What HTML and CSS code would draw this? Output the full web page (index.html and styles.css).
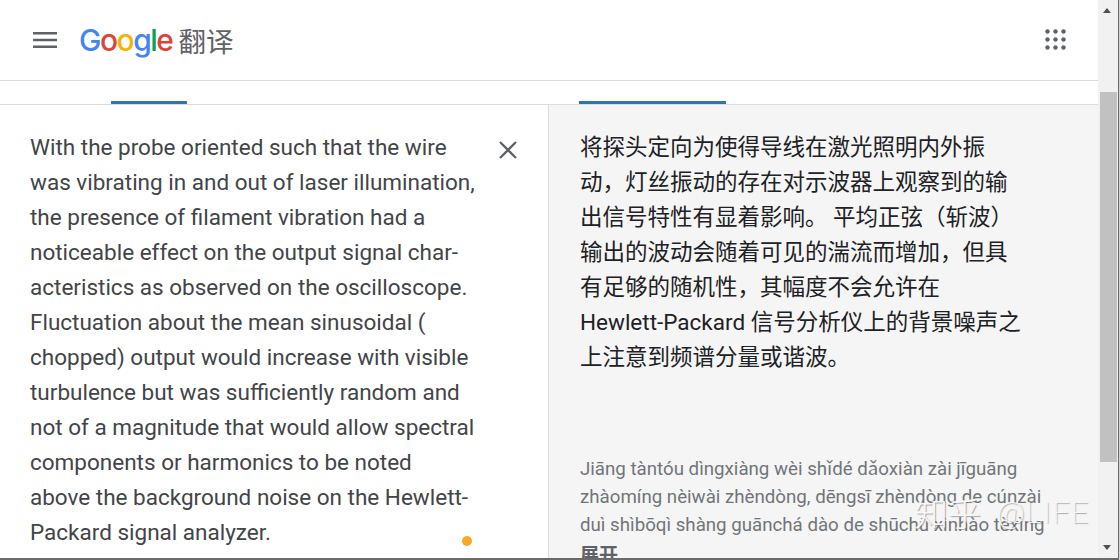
FILE: index.html
```html
<!DOCTYPE html>
<html lang="zh">
<head>
<meta charset="utf-8">
<title>Google 翻译</title>
<link rel="stylesheet" href="styles.css">
</head>
<body>
<div class="window">
  <div class="page">
    <header class="header">
      <div class="brand">
        <svg class="menu" width="24" height="24" viewBox="0 0 24 24"><path d="M0 4h24v2.6H0zM0 10.7h24v2.6H0zM0 17.4h24V20H0z" fill="#5f6368"/></svg>
        <span class="logo"><span class="g-blue">G</span><span class="g-red">o</span><span class="g-yellow">o</span><span class="g-blue">g</span><span class="g-green">l</span><span class="g-red">e</span></span>
        <span class="product">翻译</span>
      </div>
      <svg class="apps" width="21" height="21" viewBox="0 0 21 21" fill="#5f6368"><circle cx="2.5" cy="2.5" r="2.2"/><circle cx="10.5" cy="2.5" r="2.2"/><circle cx="18.5" cy="2.5" r="2.2"/><circle cx="2.5" cy="10.5" r="2.2"/><circle cx="10.5" cy="10.5" r="2.2"/><circle cx="18.5" cy="10.5" r="2.2"/><circle cx="2.5" cy="18.5" r="2.2"/><circle cx="10.5" cy="18.5" r="2.2"/><circle cx="18.5" cy="18.5" r="2.2"/></svg>
    </header>
    <div class="tabs">
      <div class="tab-side tab-left"><span class="tab-line tab-line-source"></span></div>
      <div class="tab-side tab-right"><span class="tab-line tab-line-target"></span></div>
    </div>
    <main class="panels">
      <section class="source">
        <p class="source-text">With the probe oriented such that the wire<br>was vibrating in and out of laser illumination,<br>the presence of filament vibration had a<br>noticeable effect on the output signal char-<br>acteristics as observed on the oscilloscope.<br>Fluctuation about the mean sinusoidal (<br>chopped) output would increase with visible<br>turbulence but was sufficiently random and<br>not of a magnitude that would allow spectral<br>components or harmonics to be noted<br>above the background noise on the Hewlett-<br>Packard signal analyzer.</p>
        <svg class="close" width="20" height="20" viewBox="0 0 20 20"><path d="M2 2l16 16M18 2L2 18" stroke="#5f6368" stroke-width="2.3" fill="none"/></svg>
        <span class="dot"></span>
      </section>
      <section class="target">
        <p class="target-text">将探头定向为使得导线在激光照明内外振<br>动，灯丝振动的存在对示波器上观察到的输<br>出信号特性有显着影响。 平均正弦（斩波）<br>输出的波动会随着可见的湍流而增加，但具<br>有足够的随机性，其幅度不会允许在<br>Hewlett-Packard 信号分析仪上的背景噪声之<br>上注意到频谱分量或谐波。</p>
        <p class="pinyin">Jiāng tàntóu dìngxiàng wèi shǐdé dǎoxiàn zài jīguāng<br>zhàomíng nèiwài zhèndòng, dēngsī zhèndòng de cúnzài<br>duì shìbōqì shàng guānchá dào de shūchū xìnhào tèxìng</p>
        <p class="expand">展开</p>
      </section>
    </main>
  </div>
  <div class="scrollbar">
    <span class="arrow arrow-up"></span>
    <span class="thumb"></span>
    <span class="arrow arrow-down"></span>
  </div>
  <div class="watermark"><span class="wm-cn">知乎</span><span class="wm-en">@LIFE</span></div>
</div>
</body>
</html>
```
FILE: styles.css
```css
* { box-sizing: border-box; }
html, body { margin: 0; height: 100%; overflow: hidden; }
body { background: #fff; font-family: Roboto, "Noto Sans CJK SC", sans-serif; }
.window { position: relative; display: flex; width: 1119px; height: 560px; border-bottom: 2px solid #6b6b6b; overflow: hidden; }
.page { width: 1098px; display: flex; flex-direction: column; }
.header { height: 81px; flex: none; display: flex; align-items: center; justify-content: space-between; padding: 0 32px 1px 33px; border-bottom: 1px solid #dadce0; }
.brand { display: flex; align-items: center; }
.menu { margin-right: 23px; }
.logo { font-family: Inter, "Open Sans", sans-serif; font-size: 30px; font-weight: 500; letter-spacing: -1.5px; line-height: 40px; margin-left: -1px; }
.g-blue { color: #4285f4; }
.g-red { color: #db4437; }
.g-yellow { color: #f4b400; }
.g-green { color: #0f9d58; }
.product { margin-left: 6px; font-size: 27.5px; color: #5f6368; line-height: 40px; font-family: "Noto Sans CJK SC", sans-serif; font-weight: 400; }
.tabs { height: 24px; flex: none; display: flex; border-bottom: 1px solid #dadce0; }
.tab-side { width: 549px; position: relative; display: flex; align-items: flex-end; }
.tab-left { padding-left: 111px; }
.tab-right { padding-left: 30px; }
.tab-line { height: 3px; background: #2b78b0; }
.tab-line-source { width: 76px; }
.tab-line-target { width: 147px; }
.panels { flex: 1; display: flex; min-height: 0; }
.source { position: relative; width: 549px; flex: none; padding: 25px 0 0 30px; border-right: 1px solid #dadce0; background: #fff; }
.source-text { margin: 0; font-size: 22.5px; line-height: 35px; color: #414548; white-space: nowrap; }
.close { position: absolute; left: 498px; top: 35px; }
.dot { position: absolute; left: 462px; top: 431px; width: 10px; height: 10px; border-radius: 50%; background: #f9a825; }
.target { flex: 1; padding: 25px 0 0 31px; background: #f5f5f5; overflow: hidden; }
.target-text { margin: 0; font-size: 22.5px; line-height: 35px; color: #202124; white-space: nowrap; }
.pinyin { margin: 80px 0 0; font-size: 18.7px; line-height: 28px; color: #70757a; white-space: nowrap; }
.expand { margin: 5px 0 0; font-size: 19px; line-height: 24px; font-weight: 700; color: #5f6368; }
.scrollbar { width: 21px; flex: none; background: #f1f1f1; position: relative; border-right: 1px solid #6b6b6b; }
.arrow { position: absolute; left: 5px; width: 0; height: 0; border-left: 4.5px solid transparent; border-right: 4.5px solid transparent; }
.arrow-up { top: 8px; border-bottom: 5px solid #505050; }
.arrow-down { bottom: 8px; border-top: 5px solid #505050; }
.thumb { position: absolute; left: 2px; top: 92px; width: 17px; height: 370px; background: #c1c1c1; }
.watermark { position: absolute; left: 915px; top: 490px; display: flex; align-items: center; gap: 16px; height: 44px; color: #f8f8f8; white-space: nowrap; text-shadow: 1px 1px 1px rgba(110,110,110,.6), -1px 0 0 rgba(248,248,248,.7); }
.wm-cn { font-family: "Noto Sans CJK SC", sans-serif; font-size: 33px; font-weight: 300; }
.wm-en { font-family: Roboto, sans-serif; font-size: 30px; font-weight: 100; letter-spacing: 1.5px; }
```
